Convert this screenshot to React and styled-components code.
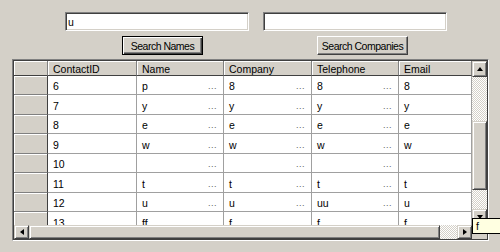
import React from "react";
import styled, { createGlobalStyle } from "styled-components";

const Global = createGlobalStyle`
  html, body { margin: 0; padding: 0; background: #d4d0c8; }
  body { width: 500px; height: 252px; overflow: hidden; font-family: "Liberation Sans", Arial, sans-serif; }
`;

const Page = styled.div`
  position: relative;
  width: 500px;
  height: 252px;
  padding-top: 12px;
  box-sizing: border-box;
  background: #d4d0c8;
  font-family: "Liberation Sans", Arial, sans-serif;
  font-size: 10.5px;
  color: #000;
`;

const InputRow = styled.div`
  display: flex;
  gap: 14px;
  padding-left: 65px;
`;

const TextBox = styled.input`
  box-sizing: border-box;
  width: 184px;
  height: 19px;
  margin: 0;
  padding: 0 2px;
  background: #fff;
  border: 1px solid;
  border-color: #808080 #ffffff #ffffff #808080;
  box-shadow: inset 1px 1px #404040, inset -1px -1px #d4d0c8;
  font-family: "Liberation Sans", Arial, sans-serif;
  font-size: 10.5px;
  color: #000;
  outline: none;
`;

const ButtonRow = styled.div`
  display: flex;
  gap: 114px;
  padding-left: 122px;
  margin-top: 5px;
`;

const Button = styled.button`
  box-sizing: border-box;
  width: ${(p) => p.$w}px;
  height: 19px;
  margin: 0;
  padding: 0;
  background: #d4d0c8;
  font-family: "Liberation Sans", Arial, sans-serif;
  font-size: 10.5px;
  letter-spacing: -0.5px;
  color: #000;
  border: 1px solid;
  border-color: ${(p) => (p.$default ? "#000" : "#ffffff #404040 #404040 #ffffff")};
  box-shadow: ${(p) =>
    p.$default
      ? "inset 1px 1px #fff, inset -1px -1px #404040, inset -2px -2px #808080"
      : "inset -1px -1px #808080"};
`;

const Frame = styled.div`
  margin: 4px 0 0 12px;
  width: 477px;
  height: 182px;
  box-sizing: border-box;
  border: 1px solid;
  border-color: #808080 #ffffff #ffffff #808080;
  display: flex;
`;

const FrameInner = styled.div`
  flex: 1;
  border: 1px solid #404040;
  display: flex;
  flex-direction: column;
  background: #d4d0c8;
`;

const Body = styled.div`
  display: flex;
  height: 164px;
`;

const TableArea = styled.div`
  flex: 1;
  overflow: hidden;
  background: #d4d0c8;
`;

const Row = styled.div`
  display: grid;
  grid-template-columns: 34px 89px 87px 88px 87px 73px;
  height: ${(p) => p.$h}px;
`;

const HeaderCell = styled.div`
  box-sizing: border-box;
  background: #d4d0c8;
  border-right: 1px solid #808080;
  border-bottom: 1px solid #404040;
  box-shadow: inset 1px 1px #ffffff;
  padding: 1px 0 0 5px;
  display: flex;
  align-items: center;
  white-space: nowrap;
  overflow: hidden;
`;

const RowHeaderCell = styled.div`
  box-sizing: border-box;
  background: #d4d0c8;
  border-right: 1px solid #404040;
  border-bottom: 1px solid #808080;
  box-shadow: inset 1px 1px #ffffff;
`;

const DataCell = styled.div`
  box-sizing: border-box;
  background: #fff;
  border-right: 1px solid #a0a0a0;
  border-bottom: 1px solid #a0a0a0;
  padding: 2px 0 0 5px;
  display: flex;
  align-items: center;
  justify-content: space-between;
  white-space: nowrap;
  overflow: hidden;
`;

const Dots = styled.span`
  align-self: flex-end;
  margin: 0 6px 3px 0;
  font-size: 9px;
  color: #606060;
  letter-spacing: 0.5px;
`;

const VScroll = styled.div`
  width: 15px;
  display: flex;
  flex-direction: column;
`;

const HScrollRow = styled.div`
  display: flex;
  height: 14px;
`;

const HScroll = styled.div`
  flex: 1;
  display: flex;
`;

const Corner = styled.div`
  width: 15px;
  background: #d4d0c8;
`;

const ScrollBtn = styled.div`
  box-sizing: border-box;
  width: ${(p) => p.$w}px;
  height: ${(p) => p.$h}px;
  flex: none;
  background: #d4d0c8;
  border: 1px solid;
  border-color: #d4d0c8 #404040 #404040 #d4d0c8;
  box-shadow: inset 1px 1px #ffffff, inset -1px -1px #808080;
  display: flex;
  align-items: center;
  justify-content: center;
`;

const Thumb = styled(ScrollBtn)`
  flex: ${(p) => (p.$grow ? 1 : "none")};
`;

const Track = styled.div`
  flex: ${(p) => (p.$grow ? 1 : "none")};
  width: ${(p) => (p.$w ? `${p.$w}px` : "auto")};
  height: ${(p) => (p.$h ? `${p.$h}px` : "auto")};
  background-color: #ffffff;
  background-image: conic-gradient(#d4d0c8 25%, transparent 0 50%, #d4d0c8 0 75%, transparent 0);
  background-size: 2px 2px;
`;

const Arrow = styled.span`
  width: 0;
  height: 0;
  border-style: solid;
  ${(p) =>
    p.$dir === "up"
      ? "border-width: 0 3.5px 4px 3.5px; border-color: transparent transparent #000 transparent;"
      : p.$dir === "down"
      ? "border-width: 4px 3.5px 0 3.5px; border-color: #000 transparent transparent transparent;"
      : p.$dir === "left"
      ? "border-width: 3.5px 4px 3.5px 0; border-color: transparent #000 transparent transparent;"
      : "border-width: 3.5px 0 3.5px 4px; border-color: transparent transparent transparent #000;"}
`;

const Tooltip = styled.div`
  position: absolute;
  left: 472px;
  top: 218px;
  width: 40px;
  height: 16px;
  box-sizing: border-box;
  background: #ffffe1;
  border: 1px solid #000;
  padding: 1px 0 0 3px;
  font-size: 10.5px;
  line-height: 13px;
`;

const columns = ["ContactID", "Name", "Company", "Telephone", "Email"];

const rows = [
  ["6", "p", "8", "8", "8"],
  ["7", "y", "y", "y", "y"],
  ["8", "e", "e", "e", "e"],
  ["9", "w", "w", "w", "w"],
  ["10", "", "", "", ""],
  ["11", "t", "t", "t", "t"],
  ["12", "u", "u", "uu", "u"],
  ["13", "ff", "f", "f", "f"],
];

export default function App() {
  return (
    <>
      <Global />
      <Page>
        <InputRow>
          <TextBox defaultValue="u" readOnly />
          <TextBox defaultValue="" readOnly />
        </InputRow>
        <ButtonRow>
          <Button $w={81} $default>Search Names</Button>
          <Button $w={91}>Search Companies</Button>
        </ButtonRow>
        <Frame>
          <FrameInner>
            <Body>
              <TableArea>
                <Row $h={15}>
                  <HeaderCell />
                  {columns.map((c) => (
                    <HeaderCell key={c}>{c}</HeaderCell>
                  ))}
                </Row>
                {rows.map((r, i) => (
                  <Row key={r[0]} $h={i % 2 === 0 ? 19 : 20}>
                    <RowHeaderCell />
                    {r.map((v, j) => (
                      <DataCell key={j}>
                        <span>{v}</span>
                        {j >= 1 && j <= 3 && <Dots>...</Dots>}
                      </DataCell>
                    ))}
                  </Row>
                ))}
              </TableArea>
              <VScroll>
                <ScrollBtn $w={15} $h={16}>
                  <Arrow $dir="up" />
                </ScrollBtn>
                <Track $h={44} />
                <Thumb $w={15} $h={69} />
                <Track $grow />
                <ScrollBtn $w={15} $h={16}>
                  <Arrow $dir="down" />
                </ScrollBtn>
              </VScroll>
            </Body>
            <HScrollRow>
              <HScroll>
                <ScrollBtn $w={15} $h={14}>
                  <Arrow $dir="left" />
                </ScrollBtn>
                <Thumb $h={14} $grow />
                <Track $w={17} />
                <ScrollBtn $w={15} $h={14}>
                  <Arrow $dir="right" />
                </ScrollBtn>
              </HScroll>
              <Corner />
            </HScrollRow>
          </FrameInner>
        </Frame>
        <Tooltip>f</Tooltip>
      </Page>
    </>
  );
}
